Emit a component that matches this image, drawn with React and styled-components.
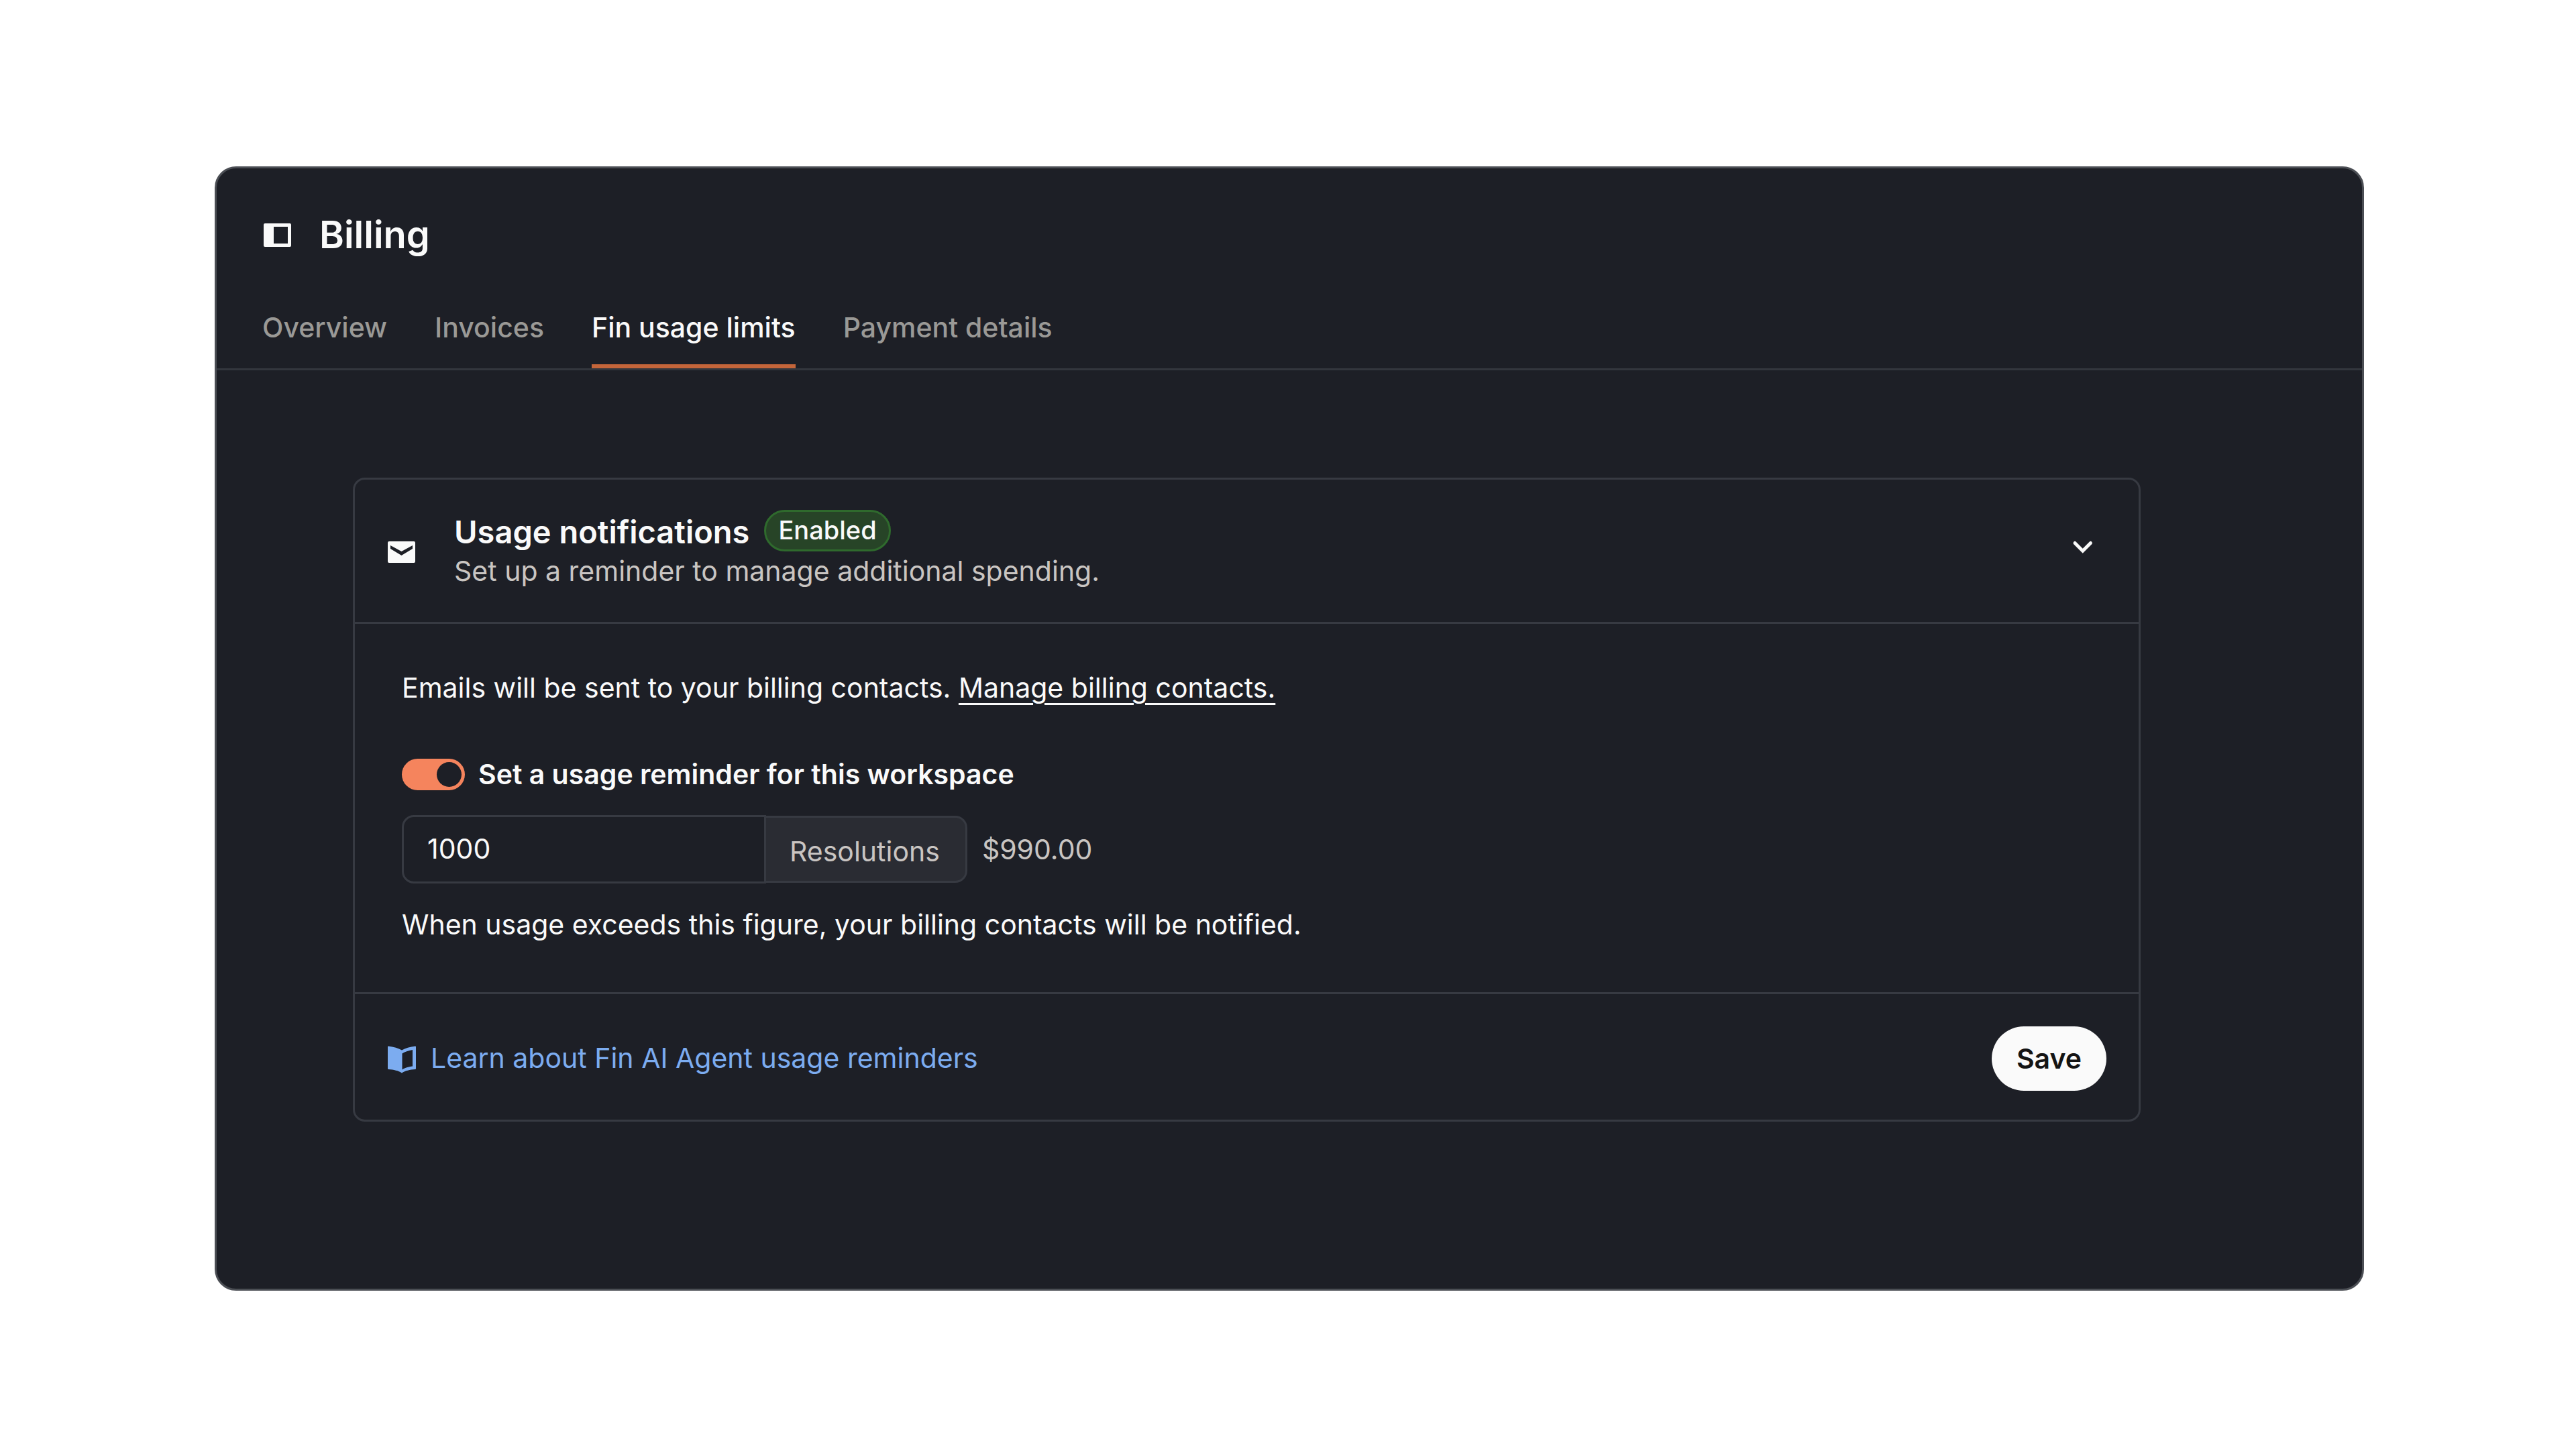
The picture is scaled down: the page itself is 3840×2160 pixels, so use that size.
import React, { useState } from "react"
import styled, { createGlobalStyle } from "styled-components"

const GlobalStyle = createGlobalStyle`
  * {
    box-sizing: border-box;
  }
  body {
    margin: 0;
    background: #ffffff;
    font-family: Inter, sans-serif;
  }
  button, input {
    font-family: inherit;
  }
`

const tabs = ["Overview", "Invoices", "Fin usage limits", "Payment details"]

const SidebarIcon = () => (
  <svg width="48" height="48" viewBox="0 0 48 48" aria-hidden="true">
    <path
      fill="#fafafa"
      fillRule="evenodd"
      d="M5 7h37a2 2 0 0 1 2 2v31a2 2 0 0 1-2 2H5a2 2 0 0 1-2-2V9a2 2 0 0 1 2-2zM18 12v25h21V12z"
    />
  </svg>
)

const MailIcon = () => (
  <svg width="48" height="48" viewBox="0 0 48 48" aria-hidden="true">
    <path
      fill="#fafafa"
      fillRule="evenodd"
      d="M5 13h37a2 2 0 0 1 2 2v28a2 2 0 0 1-2 2H5a2 2 0 0 1-2-2V15a2 2 0 0 1 2-2zM7 19v5l16.500 10L40 24v-5L23.500 28z"
    />
  </svg>
)

const ChevronIcon = () => (
  <svg width="48" height="48" viewBox="0 0 48 48" aria-hidden="true">
    <path
      fill="none"
      stroke="#fafafa"
      strokeWidth="5"
      strokeLinecap="round"
      d="M12 15.500L23.700 27.200L35.400 15.500"
    />
  </svg>
)

const BookIcon = () => (
  <svg width="48" height="48" viewBox="0 -3 48 48" aria-hidden="true">
    <path
      fill="#7cacf0"
      fillRule="evenodd"
      d="M4 3.500C12 4.500 19 6.500 24 9.500C29 6.500 36 4.500 44 3.500Q45 3.500 45 4.500V37Q45 38 44 38C36 38.500 29 40 24 43.500C19 40 12 38.500 4 38Q3 38 3 37V4.500Q3 3.500 4 3.500zM24.500 14.500V38.500C28 36 34 34 40 33.500V9C34 10 28 12 24.500 14.500z"
    />
  </svg>
)

const App = () => {
  const [activeTab, setActiveTab] = useState("Fin usage limits")
  const [enabled, setEnabled] = useState(true)
  const [limit, setLimit] = useState("1000")

  return (
    <>
      <GlobalStyle />
      <Page>
        <Panel>
          <TitleBar>
            <SidebarIcon />
            <PageTitle>Billing</PageTitle>
          </TitleBar>
          <Tabs>
            {tabs.map(tab => (
              <Tab
                key={tab}
                type="button"
                $active={tab === activeTab}
                onClick={() => setActiveTab(tab)}
              >
                {tab}
              </Tab>
            ))}
          </Tabs>
          <Content>
            <Card>
              <CardHeader>
                <MailIcon />
                <HeaderText>
                  <TitleRow>
                    <CardTitle>Usage notifications</CardTitle>
                    <Badge>Enabled</Badge>
                  </TitleRow>
                  <Subtitle>
                    Set up a reminder to manage additional spending.
                  </Subtitle>
                </HeaderText>
                <IconButton type="button" aria-label="Collapse">
                  <ChevronIcon />
                </IconButton>
              </CardHeader>
              <CardBody>
                <Text>
                  Emails will be sent to your billing contacts.{" "}
                  <TextLink href="#contacts">Manage billing contacts.</TextLink>
                </Text>
                <ToggleRow>
                  <Toggle
                    type="checkbox"
                    checked={enabled}
                    onChange={e => setEnabled(e.target.checked)}
                  />
                  Set a usage reminder for this workspace
                </ToggleRow>
                <LimitRow>
                  <LimitInput
                    id="limit"
                    type="text"
                    value={limit}
                    onChange={e => setLimit(e.target.value)}
                  />
                  <Unit htmlFor="limit">Resolutions</Unit>
                  <Price>$990.00</Price>
                </LimitRow>
                <Text>
                  When usage exceeds this figure, your billing contacts will be
                  notified.
                </Text>
              </CardBody>
              <CardFooter>
                <LearnLink href="#learn">
                  <BookIcon />
                  Learn about Fin AI Agent usage reminders
                </LearnLink>
                <SaveButton type="button">Save</SaveButton>
              </CardFooter>
            </Card>
          </Content>
        </Panel>
      </Page>
    </>
  )
}

export default App

const Page = styled.main`
  padding: 248px 316px 236px 320px;
`

const Panel = styled.section`
  border: 3px solid #4b4e54;
  border-radius: 32px;
  background: #1d1f26;
  color: #fafafa;
`

const TitleBar = styled.header`
  display: flex;
  align-items: center;
  gap: 38px;
  padding: 63px 67px 72px;
`

const PageTitle = styled.h1`
  margin: 0;
  font-size: 56px;
  line-height: 72px;
  font-weight: 600;
`

const Tabs = styled.nav`
  display: flex;
  gap: 71px;
  padding: 0 68px;
  border-bottom: 3px solid #33363d;
`

const Tab = styled.button`
  padding: 0 0 25px;
  border: 0;
  border-bottom: 6px solid ${({ $active }) => ($active ? "#c4653a" : "transparent")};
  background: none;
  color: ${({ $active }) => ($active ? "#fafafa" : "#9a9996")};
  font-size: 41px;
  line-height: 60px;
  font-weight: 500;
  cursor: pointer;
`

const Content = styled.div`
  padding: 160px 330px 249px 203px;
`

const Card = styled.article`
  border: 3px solid #373a42;
  border-radius: 18px;
`

const CardHeader = styled.div`
  display: flex;
  align-items: center;
  gap: 54px;
  padding: 45px 59px 51px 46px;
`

const HeaderText = styled.div`
  flex: 1;
`

const TitleRow = styled.div`
  display: flex;
  align-items: flex-start;
  gap: 22px;
`

const CardTitle = styled.h2`
  margin: 0;
  font-size: 47px;
  line-height: 66px;
  font-weight: 600;
`

const Badge = styled.span`
  padding: 0 18px 2px;
  border: 3px solid #2f6a2d;
  border-radius: 31px;
  background: #274427;
  font-size: 38px;
  line-height: 54px;
  font-weight: 500;
`

const Subtitle = styled.p`
  margin: 0;
  color: #c9c5c2;
  font-size: 41px;
  line-height: 50px;
`

const IconButton = styled.button`
  display: flex;
  padding: 0;
  border: 0;
  background: none;
  cursor: pointer;
`

const CardBody = styled.div`
  padding: 65px 70px 71px;
  border-top: 3px solid #373a42;
  border-bottom: 3px solid #373a42;
`

const Text = styled.p`
  margin: 0;
  font-size: 41px;
  line-height: 60px;
`

const TextLink = styled.a`
  color: inherit;
  text-decoration: underline;
  text-decoration-thickness: 3px;
  text-underline-offset: 8px;
`

const ToggleRow = styled.label`
  display: flex;
  align-items: center;
  gap: 20px;
  margin: 69px 0 31px;
  font-size: 41px;
  line-height: 60px;
  font-weight: 600;
`

const Toggle = styled.input`
  appearance: none;
  display: flex;
  justify-content: ${({ checked }) => (checked ? "flex-end" : "flex-start")};
  width: 94px;
  height: 47px;
  margin: 0;
  padding: 5px;
  border-radius: 24px;
  background: ${({ checked }) => (checked ? "#f5845d" : "#4b4e54")};
  cursor: pointer;

  &::before {
    content: "";
    width: 37px;
    height: 37px;
    border-radius: 50%;
    background: #1d1f26;
  }
`

const LimitRow = styled.div`
  display: flex;
  align-items: center;
  margin-bottom: 31px;
`

const LimitInput = styled.input`
  width: 543px;
  height: 102px;
  padding: 0 35px 2px;
  border: 3px solid #373a42;
  border-radius: 18px 0 0 18px;
  background: transparent;
  color: #fafafa;
  font-size: 41px;
`

const Unit = styled.label`
  height: 100px;
  padding: 6px 38px 0 35px;
  border: 3px solid #373a42;
  border-left: 0;
  border-radius: 0 18px 18px 0;
  background: #2a2c33;
  color: #c9c5c2;
  font-size: 41px;
  line-height: 88px;
`

const Price = styled.span`
  margin-left: 22px;
  color: #c9c5c2;
  font-size: 41px;
  line-height: 60px;
`

const CardFooter = styled.div`
  display: flex;
  align-items: center;
  justify-content: space-between;
  padding: 48px 48px 43px 46px;
`

const LearnLink = styled.a`
  display: flex;
  align-items: center;
  gap: 19px;
  padding-bottom: 3px;
  color: #7cacf0;
  font-size: 41px;
  line-height: 60px;
  text-decoration: none;
`

const SaveButton = styled.button`
  height: 96px;
  padding: 0 37px;
  border: 0;
  border-radius: 48px;
  background: #fafafa;
  color: #141414;
  font-size: 41px;
  font-weight: 600;
  cursor: pointer;
`
